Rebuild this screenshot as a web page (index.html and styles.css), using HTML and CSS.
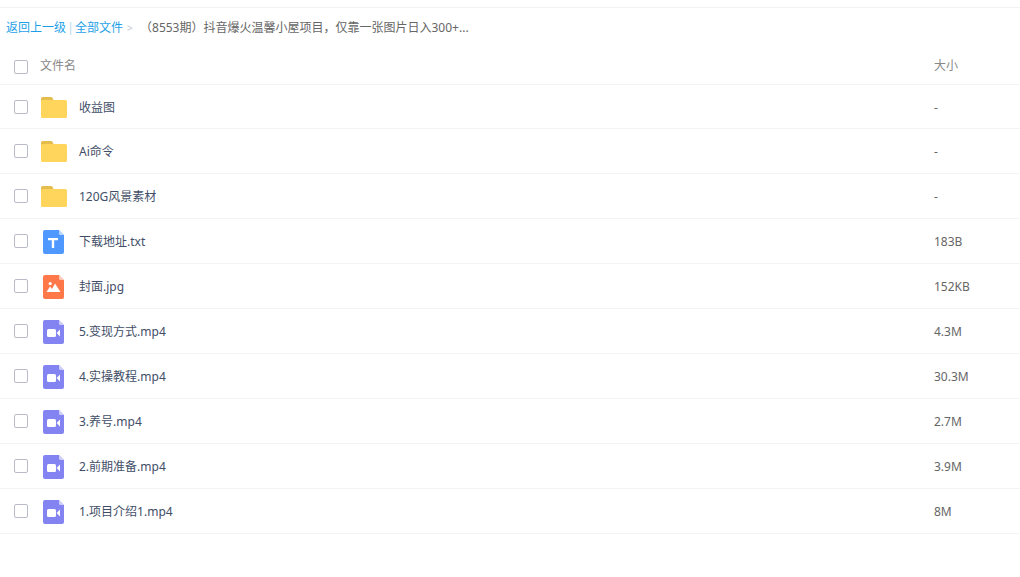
FILE: index.html
```html
<!DOCTYPE html>
<html lang="zh-CN">
<head>
<meta charset="utf-8">
<title>全部文件</title>
<link rel="stylesheet" href="styles.css">
</head>
<body>
<svg class="sprite" aria-hidden="true">
  <symbol id="folder" viewBox="-1 -1 27 24">
    <path fill="#e5bd4f" d="M0 1.5Q0 0 1.5 0H10Q11 0 11.6 1L13 4V8H0z"/>
    <rect y="3" width="26" height="18" rx="1.6" fill="#ffd55c"/>
  </symbol>
  <symbol id="page" viewBox="0 0 21 24">
    <path d="M2 0H16L21 5V22Q21 24 19 24H2Q0 24 0 22V2Q0 0 2 0z"/>
    <path fill="#fff" fill-opacity=".6" d="M16 0L21 5H17.5Q16 5 16 3.5z"/>
  </symbol>
  <symbol id="text" viewBox="0 0 21 24">
    <use href="#page" fill="#4e98ff"/>
    <path fill="#fff" d="M5 8H15V10.2H11.2V18H8.8V10.2H5z"/>
  </symbol>
  <symbol id="image" viewBox="0 0 21 24">
    <use href="#page" fill="#ff7849"/>
    <circle cx="7.2" cy="8.6" r="1.6" fill="#fff"/>
    <path fill="#fff" d="M3.5 17L7 11.5L9 14L12 8.5L17.5 17z"/>
  </symbol>
  <symbol id="video" viewBox="0 0 21 24">
    <use href="#page" fill="#8384f2"/>
    <rect x="4" y="9" width="9" height="8" rx="1.5" fill="#fff"/>
    <path fill="#fff" d="M13.6 13L17 9.4V16.6z"/>
  </symbol>
</svg>
<main class="files">
  <nav class="crumbs">
    <a href="#">返回上一级</a><span class="bar">|</span><a href="#">全部文件</a><span class="arrow">&gt;</span><span>（8553期）抖音爆火温馨小屋项目，仅靠一张图片日入300+...</span>
  </nav>
  <table class="list">
    <thead>
      <tr><th class="pick"><input type="checkbox" class="box" aria-label="全选"></th><th class="name">文件名</th><th class="size">大小</th></tr>
    </thead>
    <tbody>
      <tr><td class="pick"><input type="checkbox" class="box" id="f1"></td><td><label class="file" for="f1"><svg class="icon"><use href="#folder"/></svg>收益图</label></td><td>-</td></tr>
      <tr><td class="pick"><input type="checkbox" class="box" id="f2"></td><td><label class="file" for="f2"><svg class="icon"><use href="#folder"/></svg>Ai命令</label></td><td>-</td></tr>
      <tr><td class="pick"><input type="checkbox" class="box" id="f3"></td><td><label class="file" for="f3"><svg class="icon"><use href="#folder"/></svg>120G风景素材</label></td><td>-</td></tr>
      <tr><td class="pick"><input type="checkbox" class="box" id="f4"></td><td><label class="file" for="f4"><svg class="icon"><use href="#text"/></svg>下载地址.txt</label></td><td>183B</td></tr>
      <tr><td class="pick"><input type="checkbox" class="box" id="f5"></td><td><label class="file" for="f5"><svg class="icon"><use href="#image"/></svg>封面.jpg</label></td><td>152KB</td></tr>
      <tr><td class="pick"><input type="checkbox" class="box" id="f6"></td><td><label class="file" for="f6"><svg class="icon"><use href="#video"/></svg>5.变现方式.mp4</label></td><td>4.3M</td></tr>
      <tr><td class="pick"><input type="checkbox" class="box" id="f7"></td><td><label class="file" for="f7"><svg class="icon"><use href="#video"/></svg>4.实操教程.mp4</label></td><td>30.3M</td></tr>
      <tr><td class="pick"><input type="checkbox" class="box" id="f8"></td><td><label class="file" for="f8"><svg class="icon"><use href="#video"/></svg>3.养号.mp4</label></td><td>2.7M</td></tr>
      <tr><td class="pick"><input type="checkbox" class="box" id="f9"></td><td><label class="file" for="f9"><svg class="icon"><use href="#video"/></svg>2.前期准备.mp4</label></td><td>3.9M</td></tr>
      <tr><td class="pick"><input type="checkbox" class="box" id="f10"></td><td><label class="file" for="f10"><svg class="icon"><use href="#video"/></svg>1.项目介绍1.mp4</label></td><td>8M</td></tr>
    </tbody>
  </table>
</main>
</body>
</html>
```
FILE: styles.css
```css
* { box-sizing: border-box; }
body {
  margin: 0;
  background: #fff;
  color: #666;
  font: 12px/18px "Noto Sans", "Noto Sans CJK SC", sans-serif;
}
.sprite { display: none; }
.files { padding-top: 7px; }
.crumbs {
  display: flex;
  align-items: center;
  height: 40px;
  padding-left: 6px;
  border-top: 1px solid #f2f2f4;
}
.crumbs a { color: #1e9fe8; text-decoration: none; }
.bar { width: 9px; text-align: center; color: #b4d6ee; }
.arrow { width: 17px; padding-left: 4px; color: #c3c6d0; font-size: 10px; }
.list {
  width: 100%;
  table-layout: fixed;
  border-collapse: separate;
  border-spacing: 0;
}
th, td {
  height: 45px;
  padding: 0;
  border-bottom: 1px solid #f2f4f8;
  text-align: left;
  vertical-align: middle;
}
th { height: 38px; color: #888; font-weight: 400; }
td:not(.pick) { padding-top: 2px; }
tbody tr:first-child td { height: 44px; }
.pick { width: 40px; padding-left: 14px; }
th.pick { padding-top: 2px; }
.size { width: 86px; }
.box {
  appearance: none;
  display: block;
  width: 14px;
  height: 14px;
  margin: 0;
  border: 1px solid #b9bbc8;
  border-radius: 2px;
  background: #fff;
}
.box:checked { background: #1e9fe8; }
.file { display: flex; align-items: center; color: #424e67; }
.icon { width: 27px; height: 24px; margin-right: 12px; }
```
